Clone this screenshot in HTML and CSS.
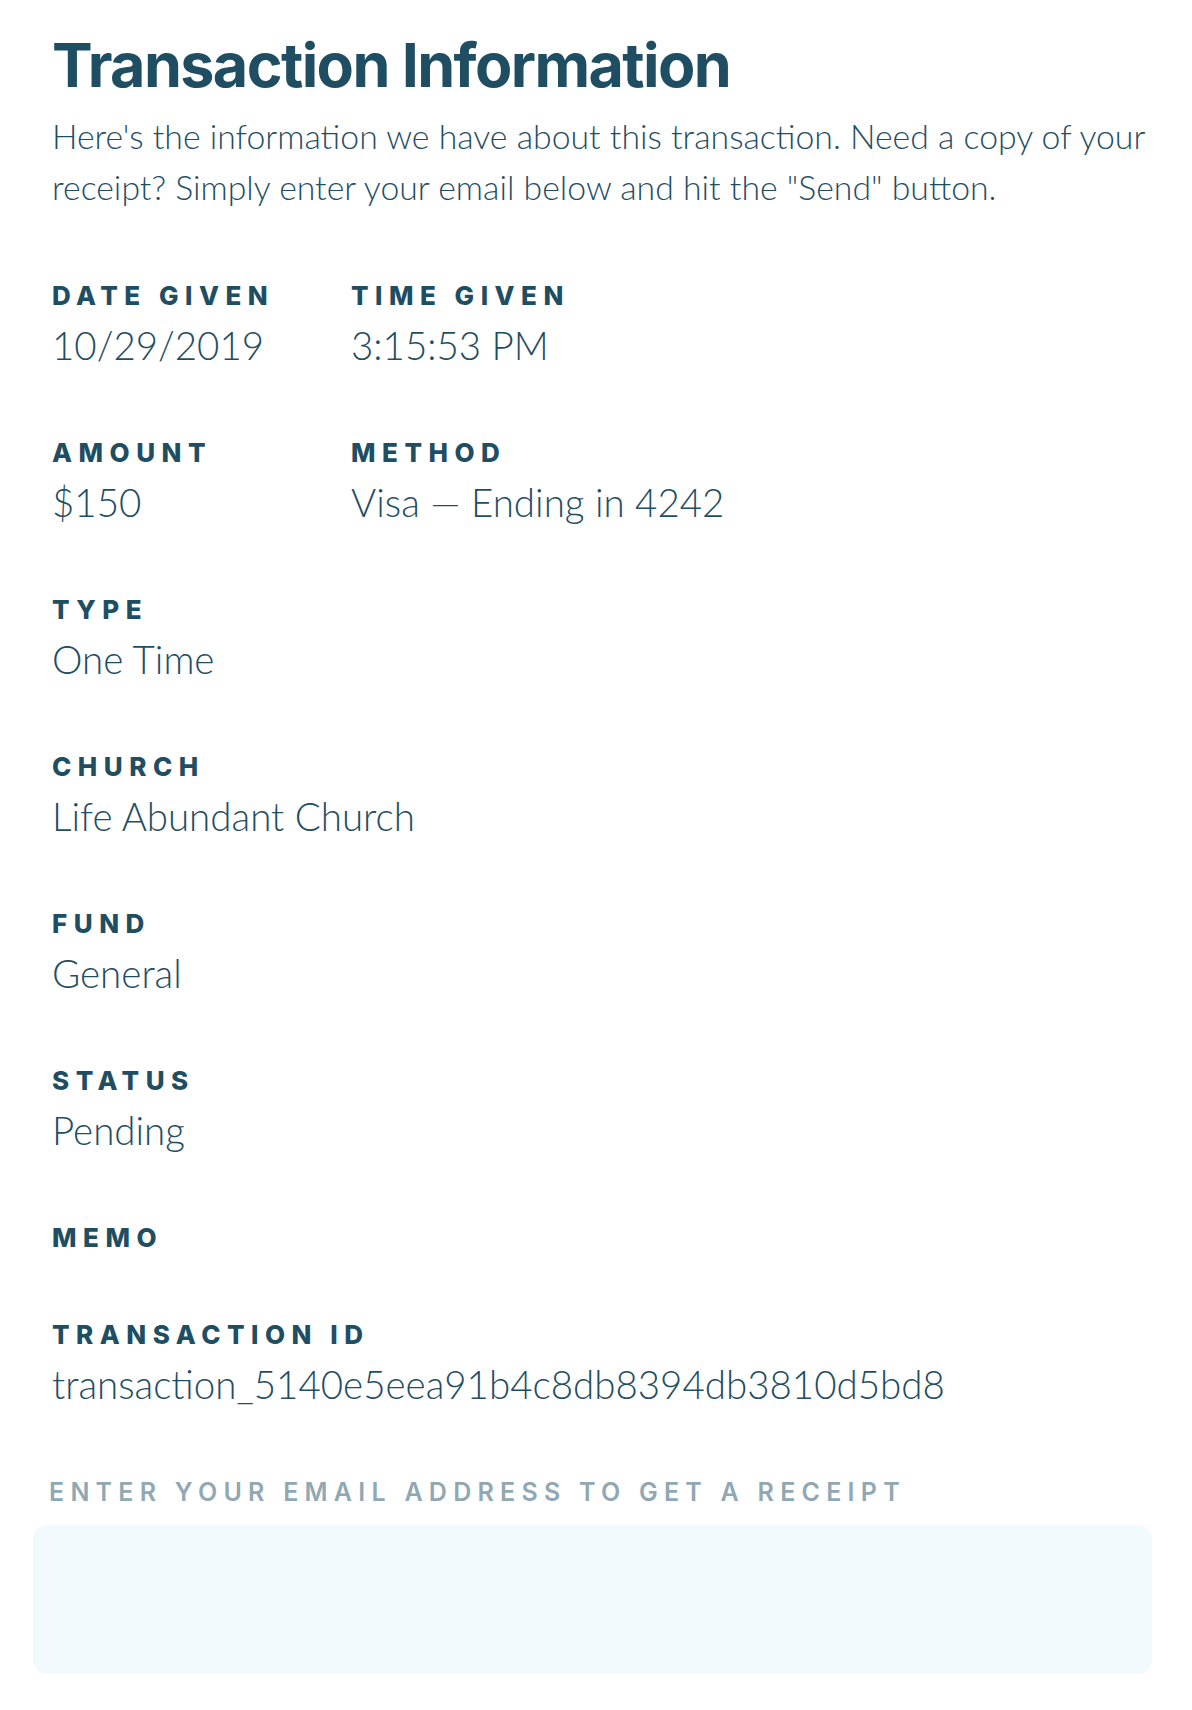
FILE: index.html
```html
<!DOCTYPE html>
<html lang="en">
<head>
    <meta charset="UTF-8">
    <meta name="viewport" content="width=device-width, initial-scale=1.0">
    <title>Transaction Information</title>
    <link rel="stylesheet" href="styles.css">
</head>
<body>
    <div class="page">
        <h1>Transaction Information</h1>
        <p class="intro">Here's the information we have about this transaction. Need a copy of your receipt? Simply enter your email below and hit the "Send" button.</p>

        <div class="details">
            <div class="row">
                <div class="field col">
                    <div class="label">Date Given</div>
                    <div class="value">10/29/2019</div>
                </div>
                <div class="field">
                    <div class="label">Time Given</div>
                    <div class="value">3:15:53 PM</div>
                </div>
            </div>
            <div class="row">
                <div class="field col">
                    <div class="label">Amount</div>
                    <div class="value">$150</div>
                </div>
                <div class="field">
                    <div class="label">Method</div>
                    <div class="value">Visa &mdash; Ending in 4242</div>
                </div>
            </div>
            <div class="field">
                <div class="label">Type</div>
                <div class="value">One Time</div>
            </div>
            <div class="field">
                <div class="label">Church</div>
                <div class="value">Life Abundant Church</div>
            </div>
            <div class="field">
                <div class="label">Fund</div>
                <div class="value">General</div>
            </div>
            <div class="field">
                <div class="label">Status</div>
                <div class="value">Pending</div>
            </div>
            <div class="field">
                <div class="label">Memo</div>
                <div class="value"></div>
            </div>
            <div class="field">
                <div class="label">Transaction ID</div>
                <div class="value">transaction_5140e5eea91b4c8db8394db3810d5bd8</div>
            </div>
        </div>

        <form class="receipt-form">
            <label for="email">Enter your email address to get a receipt</label>
            <input type="email" id="email" name="email">
        </form>
    </div>
</body>
</html>
```

FILE: styles.css
```css
body {
    font-family: Lato, "Open Sans", sans-serif;
    background-color: #fff;
    color: #1f4e63;
    margin: 0;
    padding: 0;
}
.page {
    padding: 27px 40px 40px 52px;
}
h1 {
    font-family: Inter, Lato, sans-serif;
    font-weight: 700;
    font-size: 61px;
    letter-spacing: -1.6px;
    line-height: 76px;
    margin: 0;
}
.intro {
    font-weight: 300;
    font-size: 33.8px;
    line-height: 51px;
    margin: 8px 0 0;
}
.details {
    margin-top: 68px;
}
.row {
    display: flex;
}
.field {
    display: flex;
    flex-direction: column;
    gap: 4px;
    margin-bottom: 63px;
}
.col {
    width: 299px;
}
.label {
    font-family: Inter, Lato, sans-serif;
    font-weight: 800;
    font-size: 26px;
    line-height: 30px;
    letter-spacing: 0.25em;
    text-transform: uppercase;
}
.value {
    font-weight: 300;
    font-size: 38.5px;
    line-height: 60px;
}
.receipt-form label {
    display: block;
    margin-left: -3px;
    font-family: Inter, Lato, sans-serif;
    font-weight: 600;
    font-size: 25px;
    line-height: 30px;
    letter-spacing: 0.25em;
    text-transform: uppercase;
    color: #8fa8b3;
}
.receipt-form input {
    display: block;
    width: 1119px;
    height: 149px;
    margin: 18px 0 0 -19px;
    box-sizing: border-box;
    border: none;
    border-radius: 14px;
    background: #f2fafd;
}
```
